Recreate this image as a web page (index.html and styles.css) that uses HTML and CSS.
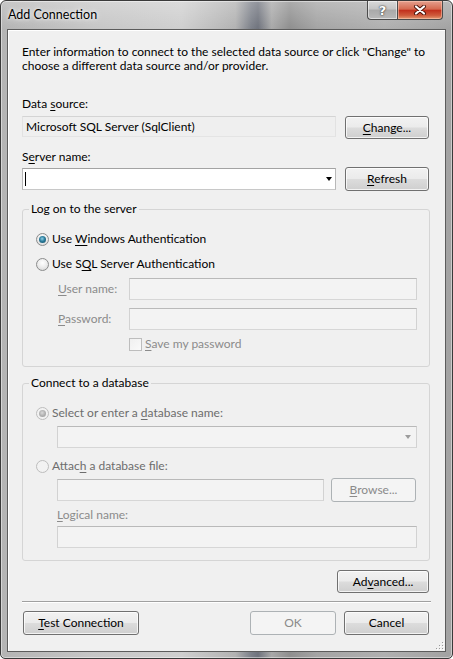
FILE: index.html
```html
<!DOCTYPE html>
<html lang="en">
<head>
    <meta charset="UTF-8">
    <title>Add Connection</title>
    <link rel="stylesheet" href="styles.css">
</head>
<body>
    <div class="window">
        <div class="titlebar">
            <span class="title">Add Connection</span>
            <div class="caption">
                <span class="cap-btn help">?</span>
                <span class="cap-btn close">
                    <svg width="14" height="10" viewBox="0 0 14 10">
                        <path d="M3 1.5 L11 8.5 M11 1.5 L3 8.5" stroke="#4a1208" stroke-width="4" stroke-linecap="round"/>
                        <path d="M3 1.5 L11 8.5 M11 1.5 L3 8.5" stroke="#fff" stroke-width="2.2" stroke-linecap="round"/>
                    </svg>
                </span>
            </div>
        </div>

        <div class="client">
            <p class="intro">Enter information to connect to the selected data source or click "Change" to<br>choose a different data source and/or provider.</p>

            <div class="label ds-label">Data <u>s</u>ource:</div>
            <div class="row">
                <div class="textbox readonly">Microsoft SQL Server (SqlClient)</div>
                <button class="btn"><u>C</u>hange...</button>
            </div>

            <div class="label server-label">S<u>e</u>rver name:</div>
            <div class="row server-row">
                <div class="textbox combo">
                    <span class="caret"></span>
                    <span class="arrow"></span>
                </div>
                <button class="btn tall"><u>R</u>efresh</button>
            </div>

            <!-- authentication -->
            <fieldset class="group logon">
                <legend>Log on to the server</legend>
                <div class="radio-row">
                    <span class="radio on"></span>
                    <span>Use <u>W</u>indows Authentication</span>
                </div>
                <div class="radio-row second">
                    <span class="radio"></span>
                    <span>Use S<u>Q</u>L Server Authentication</span>
                </div>
                <div class="creds">
                    <span class="dim"><u>U</u>ser name:</span>
                    <div class="textbox disabled"></div>
                    <span class="dim"><u>P</u>assword:</span>
                    <div class="textbox disabled"></div>
                    <span></span>
                    <div class="check-row">
                        <span class="check"></span>
                        <span class="dim"><u>S</u>ave my password</span>
                    </div>
                </div>
            </fieldset>

            <!-- database -->
            <fieldset class="group database">
                <legend>Connect to a database</legend>
                <div class="radio-row dim-dark">
                    <span class="radio on disabled"></span>
                    <span>Select or enter a <u>d</u>atabase name:</span>
                </div>
                <div class="textbox disabled combo db-combo">
                    <span class="arrow"></span>
                </div>
                <div class="radio-row dim-dark attach">
                    <span class="radio disabled"></span>
                    <span>Attac<u>h</u> a database file:</span>
                </div>
                <div class="file-row">
                    <div class="textbox disabled"></div>
                    <button class="btn tall" disabled><u>B</u>rowse...</button>
                </div>
                <div class="dim logical-label"><u>L</u>ogical name:</div>
                <div class="textbox disabled logical"></div>
            </fieldset>

            <div class="advanced-row">
                <button class="btn advanced">Ad<u>v</u>anced...</button>
            </div>

            <div class="separator"></div>

            <div class="footer-row">
                <button class="btn tall test"><u>T</u>est Connection</button>
                <div class="footer-right">
                    <button class="btn tall ok" disabled>OK</button>
                    <button class="btn tall cancel">Cancel</button>
                </div>
            </div>

            <svg class="grip" width="9" height="9" viewBox="0 0 9 9">
                <g fill="#fff">
                    <rect x="8" y="2" width="1" height="1"/><rect x="5" y="5" width="1" height="1"/>
                    <rect x="8" y="5" width="1" height="1"/><rect x="2" y="8" width="1" height="1"/>
                    <rect x="5" y="8" width="1" height="1"/><rect x="8" y="8" width="1" height="1"/>
                </g>
                <g fill="#9a9a9a">
                    <rect x="7" y="1" width="1" height="1"/><rect x="4" y="4" width="1" height="1"/>
                    <rect x="7" y="4" width="1" height="1"/><rect x="1" y="7" width="1" height="1"/>
                    <rect x="4" y="7" width="1" height="1"/><rect x="7" y="7" width="1" height="1"/>
                </g>
            </svg>
        </div>
    </div>
</body>
</html>
```

FILE: styles.css
```css
* {
    box-sizing: border-box;
}

body {
    margin: 0;
    font-family: Lato, "Liberation Sans", sans-serif;
    font-size: 12px;
    line-height: 14px;
    color: #000;
    background: #fff;
}

u {
    text-decoration: underline;
    text-underline-offset: 2px;
}

/* glass frame */
.window {
    width: 453px;
    height: 659px;
    display: flex;
    flex-direction: column;
    padding: 0 6px 6px;
    border: 1px solid #3a3a3a;
    border-radius: 6px 6px 5px 5px;
    background:
        linear-gradient(180deg, rgba(255, 255, 255, 0.25) 0, rgba(255, 255, 255, 0) 28px),
        linear-gradient(90deg, #b4b4b4 0%, #c6c6c6 20%, #cfcfcf 40%, #b2b2b2 52%, #7c8089 55.5%, #6f737d 57%, #a9a9a9 60%, #8f8f8f 64%, #a4a4a4 70%, #b0b0b0 85%, #a2a2a2 100%);
    box-shadow: inset 0 0 0 1px rgba(255, 255, 255, 0.45);
}

.titlebar {
    height: 28px;
    display: flex;
    align-items: flex-start;
    flex: none;
}

.title {
    padding: 7px 0 0 1px;
    font-size: 12.5px;
    text-shadow: 0 0 6px rgba(255, 255, 255, 0.9), 0 0 3px rgba(255, 255, 255, 0.9);
}

.caption {
    margin-left: auto;
    margin-right: 3px;
    display: flex;
}

.cap-btn {
    height: 19px;
    display: flex;
    align-items: center;
    justify-content: center;
    border: 1px solid #4b4b4b;
    border-top: none;
}

.help {
    width: 30px;
    border-radius: 0 0 0 4px;
    border-right: none;
    background: linear-gradient(180deg, #d9d9d9 0%, #c4c4c4 45%, #a9a9a9 50%, #b9b9b9 100%);
    box-shadow: inset 0 0 0 1px rgba(255, 255, 255, 0.5);
    color: #fff;
    font: bold 13px "DejaVu Sans", sans-serif;
    text-shadow: 0 0 2px #333, 0 0 1px #333;
}

.close {
    width: 46px;
    border-radius: 0 0 4px 0;
    background: linear-gradient(180deg, #e5a08e 0%, #d56a50 45%, #c2301d 52%, #cf5b3c 80%, #e39a72 100%);
    box-shadow: inset 0 0 0 1px rgba(255, 210, 190, 0.5);
}

/* dialog body */
.client {
    position: relative;
    flex: 1;
    border: 1px solid #5c5c5c;
    background: #f0f0f0;
    padding: 15px 16px 0 14px;
    box-shadow: inset 1px 1px 0 #fff;
}

.intro {
    margin: 0;
    white-space: nowrap;
}

.ds-label {
    margin-top: 24px;
}

.server-label {
    margin-top: 11px;
}

.row {
    display: flex;
    align-items: flex-start;
    gap: 9px;
    margin-top: 5px;
}

.server-row {
    margin-top: 3px;
    align-items: center;
}

.row .textbox {
    flex: 1;
}

.textbox {
    height: 22px;
    border: 1px solid;
    border-color: #abadb3 #dbdfe6 #e3e9ef #e2e3ea;
    background: #fff;
}

.readonly {
    height: 21px;
    border-color: #d4d4d4 #e2e2e2 #e4e4e4 #e2e2e2;
    background: #efefef;
    padding: 3px 0 0 3px;
}

.combo {
    position: relative;
    display: flex;
    align-items: center;
    border-color: #a3a3a3 #b8b8b8 #c8c8c8 #b8b8b8;
}

.caret {
    width: 1px;
    height: 14px;
    margin-left: 2px;
    background: #000;
}

.arrow {
    margin-left: auto;
    margin-right: 3px;
    border-left: 3.5px solid transparent;
    border-right: 3.5px solid transparent;
    border-top: 4px solid #000;
}

.disabled.textbox {
    background: #f3f3f3;
    border-color: #b9b9b9 #d2d2d2 #d6d6d6 #d2d2d2;
}

.db-combo .arrow {
    border-top-color: #9c9c9c;
    margin-right: 5px;
}

/* buttons */
.btn {
    width: 84px;
    height: 23px;
    flex: none;
    padding: 0;
    font: inherit;
    color: #000;
    border: 1px solid #707070;
    border-radius: 3px;
    background: linear-gradient(180deg, #f2f2f2 0%, #ebebeb 48%, #dcdcdc 52%, #cfcfcf 100%);
    box-shadow: inset 0 0 0 1px rgba(255, 255, 255, 0.75);
}

.btn.tall {
    height: 24px;
}

.btn:disabled {
    color: #8a8a8a;
    border-color: #adb2b5;
    background: #f4f4f4;
    box-shadow: none;
}

/* group boxes */
.group {
    margin: 0 -1px 0 0;
    padding: 15px 12px 15px 13px;
    border: 1px solid #d5d5d5;
    border-radius: 3px;
}

.group legend {
    margin-left: -7px;
    padding: 0 2px;
    line-height: 14px;
}

.logon {
    margin-top: 11px;
}

.database {
    margin-top: 9px;
    padding-bottom: 12px;
}

.radio-row {
    height: 16px;
    display: flex;
    align-items: center;
    gap: 3px;
}

.radio-row.second {
    margin-top: 9px;
}

.radio {
    width: 13px;
    height: 13px;
    flex: none;
    display: flex;
    align-items: center;
    justify-content: center;
    border: 1px solid #8b8c8c;
    border-radius: 50%;
    background: radial-gradient(circle at 50% 35%, #ffffff 0, #eeeeee 45%, #d2d2d2 100%);
}

.radio.on::after {
    content: '';
    width: 7px;
    height: 7px;
    border-radius: 50%;
    background: radial-gradient(circle at 45% 40%, #8fd0e8 0, #2b7c9b 45%, #0f4a60 100%);
}

.radio.disabled {
    border-color: #bdbdbd;
    background: #f2f2f2;
}

.radio.disabled.on::after {
    background: radial-gradient(circle at 45% 40%, #dadada 0, #b2b2b2 50%, #9c9c9c 100%);
}

.dim {
    color: #8b8b8b;
}

.dim-dark {
    color: #6d6d6d;
}

.creds {
    display: grid;
    grid-template-columns: 71px 1fr;
    align-items: center;
    row-gap: 8px;
    margin: 6px 0 0 22px;
}

.creds .check-row {
    margin-top: -1px;
}

.check-row {
    display: flex;
    align-items: center;
    gap: 3px;
    height: 14px;
}

.check {
    width: 13px;
    height: 13px;
    border: 1px solid #bdbdbd;
    background: linear-gradient(135deg, #f0f0f0, #fafafa);
}

.db-combo {
    margin: 5px 0 0 21px;
}

.radio-row.attach {
    margin-top: 10px;
}

.file-row {
    display: flex;
    align-items: center;
    gap: 7px;
    margin: 4px 1px 0 21px;
}

.file-row .textbox {
    flex: 1;
}

.file-row .btn {
    width: 85px;
}

.logical-label {
    margin: 6px 0 0 21px;
}

.logical {
    margin: 4px 0 0 21px;
}

/* bottom of the dialog */
.advanced-row {
    display: flex;
    justify-content: flex-end;
    margin-top: 9px;
}

.advanced {
    width: 92px;
}

.separator {
    margin: 8px -2px 0 0;
    border-top: 1px solid #a0a0a0;
    border-bottom: 1px solid #fff;
}

.footer-row {
    display: flex;
    margin-top: 8px;
}

.test {
    width: 116px;
    margin-left: 1px;
}

.footer-right {
    margin-left: auto;
    display: flex;
    gap: 8px;
}

.ok {
    width: 86px;
}

.cancel {
    width: 85px;
}

.grip {
    position: absolute;
    right: 1px;
    bottom: 1px;
}
```
